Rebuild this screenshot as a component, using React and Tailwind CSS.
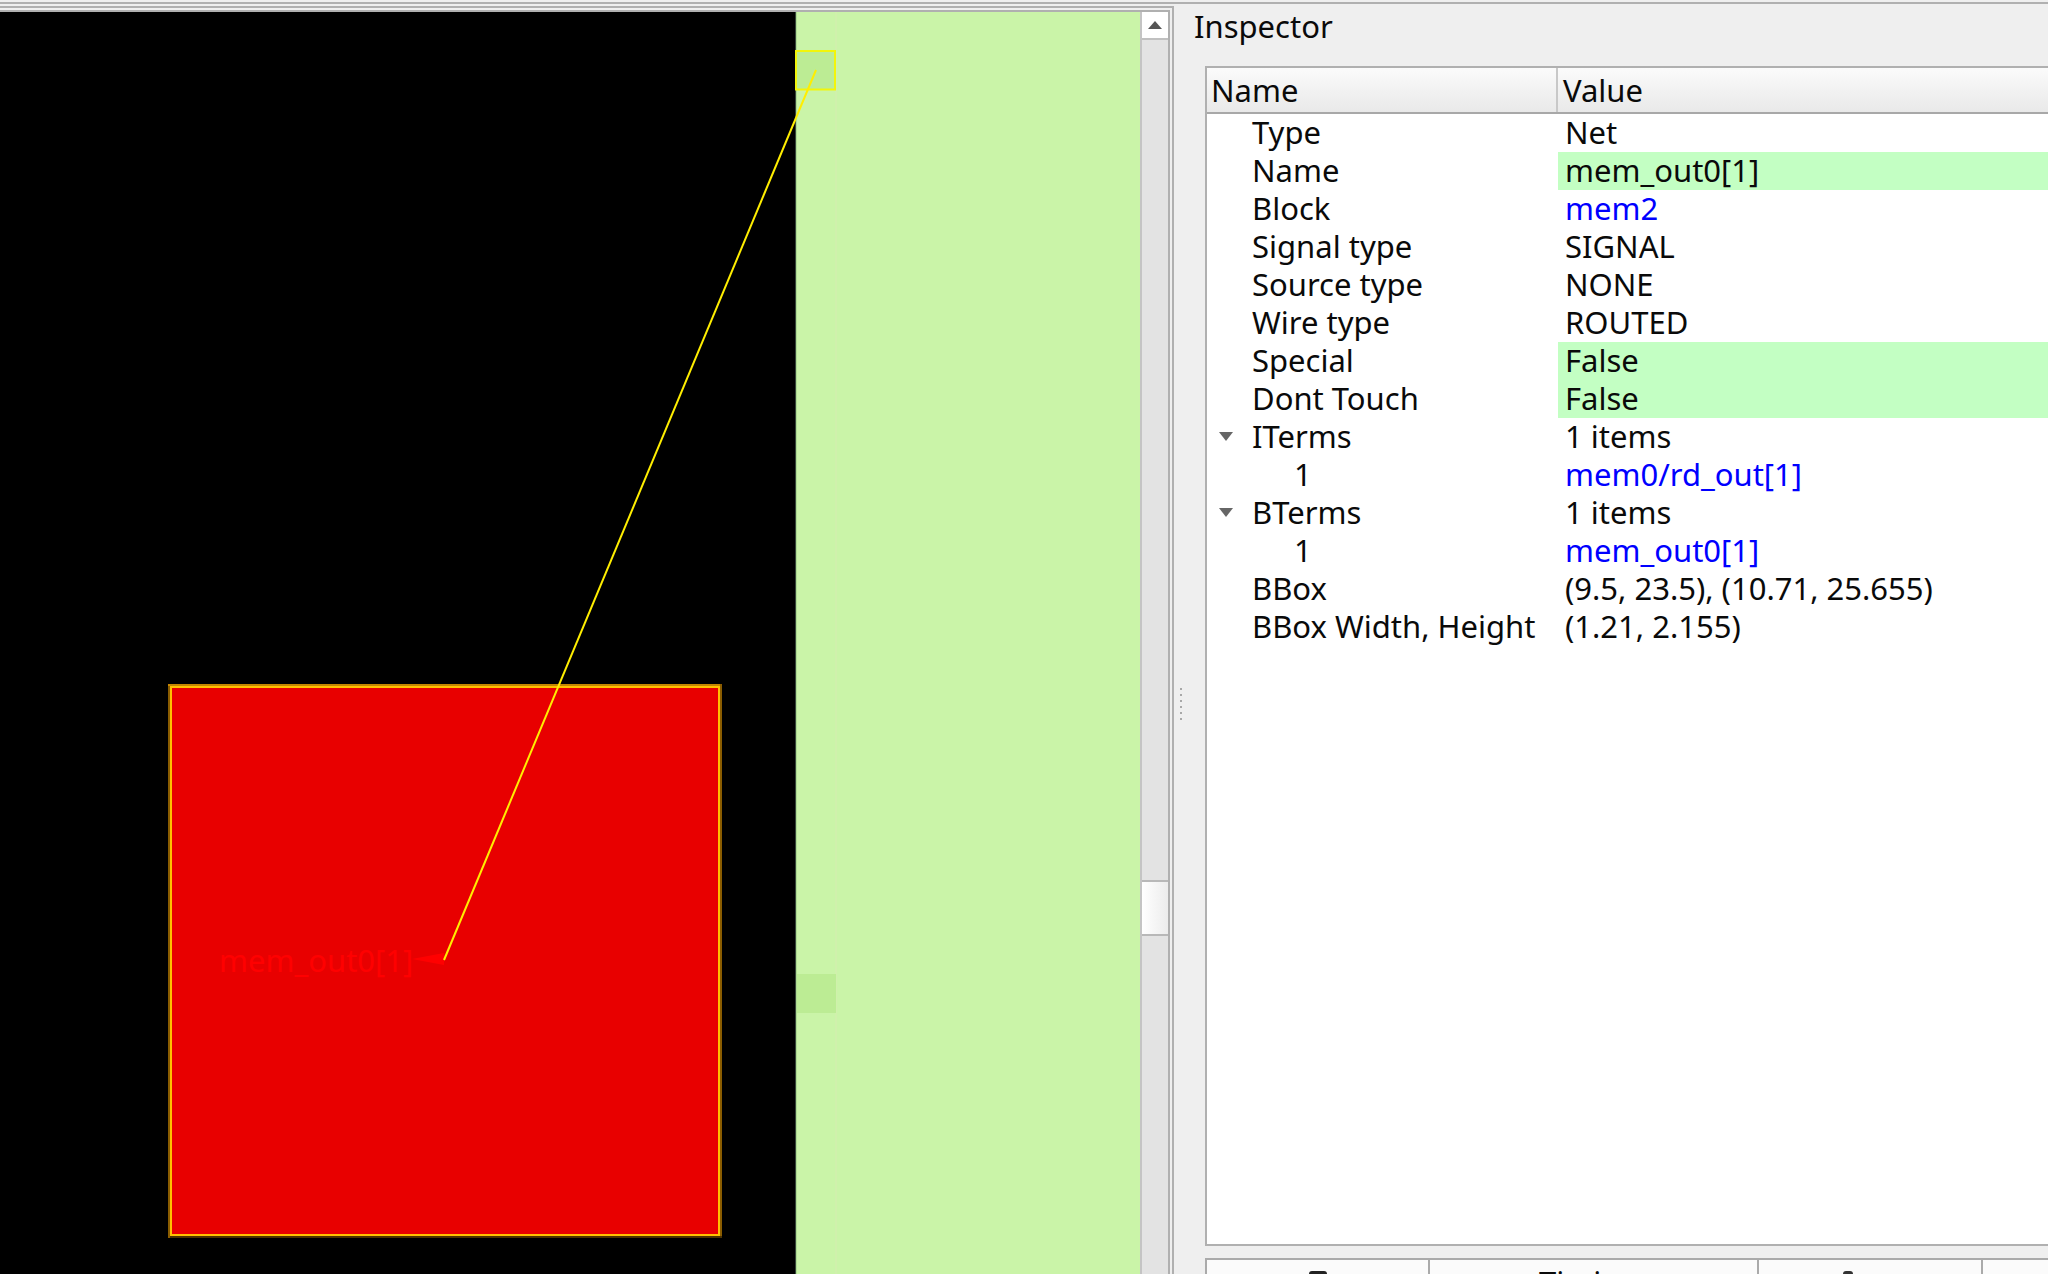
const rows = [
  { name: "Type", value: "Net" },
  { name: "Name", value: "mem_out0[1]", hi: true },
  { name: "Block", value: "mem2", link: true },
  { name: "Signal type", value: "SIGNAL" },
  { name: "Source type", value: "NONE" },
  { name: "Wire type", value: "ROUTED" },
  { name: "Special", value: "False", hi: true },
  { name: "Dont Touch", value: "False", hi: true },
  { name: "ITerms", value: "1 items", arrow: true },
  { name: "1", value: "mem0/rd_out[1]", link: true, child: true },
  { name: "BTerms", value: "1 items", arrow: true },
  { name: "1", value: "mem_out0[1]", link: true, child: true },
  { name: "BBox", value: "(9.5, 23.5), (10.71, 25.655)" },
  { name: "BBox Width, Height", value: "(1.21, 2.155)" },
];

function Row({ r }) {
  return (
    <div className="flex h-[38px] items-center">
      <div className="relative w-[351px] shrink-0 h-full flex items-center pb-[2px]">
        {r.arrow && (
          <svg className="absolute left-[12px] top-[14px]" width="14" height="9" viewBox="0 0 14 9">
            <path d="M0 0H14L7 9Z" fill="#666" />
          </svg>
        )}
        <span className={r.child ? "pl-[87px]" : "pl-[45px]"}>{r.name}</span>
      </div>
      <div className={`flex-1 h-full flex items-center pl-[7px] pb-[2px] ${r.hi ? "bg-[#c3ffc3]" : ""} ${r.link ? "text-[#0000ff]" : ""}`}>
        {r.value}
      </div>
    </div>
  );
}

function Canvas() {
  return (
    <div className="relative flex-1 flex overflow-hidden bg-black">
      <div className="w-[795px] shrink-0 bg-black" />
      <div className="flex-1 bg-[#caf4a8] border-l border-[#39483a]" />
      <svg className="absolute inset-0" width="1140" height="1262" viewBox="0 12 1140 1262">
        <rect x="796" y="12" width="1" height="1262" fill="#aedb92" />
        <rect x="835" y="12" width="2" height="1262" fill="#d0f0ac" />
        <rect x="797" y="974" width="39" height="39" fill="#bcec94" />
        <rect x="797" y="51" width="38" height="38" fill="#bcec94" />
        <rect x="796" y="51" width="39" height="38.5" fill="none" stroke="#f2f50a" strokeWidth="2" />
        <rect x="168" y="684" width="554" height="554" fill="#8a5c00" />
        <rect x="168" y="684" width="552" height="2" fill="#c68600" />
        <rect x="170" y="686" width="550" height="550" fill="#ffc000" />
        <rect x="172" y="688" width="546" height="546" fill="#e80000" />
        <rect x="170" y="1236" width="552" height="2" fill="#4a3000" />
        <path d="M412 959L444 953V965Z" fill="#ff0000" />
        <line x1="444" y1="960" x2="816" y2="70" stroke="#ffee00" strokeWidth="2" />
      </svg>
      <span className="absolute left-[219px] top-[926px] text-[31px] leading-[44px] text-[#ff0000]">mem_out0[1]</span>
    </div>
  );
}

function Scrollbar() {
  return (
    <div className="w-[28px] shrink-0 flex flex-col bg-[#e3e3e3] border-l-2 border-[#c4c4c4]">
      <div className="h-[28px] shrink-0 bg-white border-b-2 border-[#c0c0c0] flex items-center justify-center">
        <svg width="14" height="8" viewBox="0 0 14 8">
          <path d="M7 0L14 8H0Z" fill="#555" />
        </svg>
      </div>
      <div className="h-[840px] shrink-0" />
      <div className="h-[56px] shrink-0 border-y-2 border-[#b8b8b8] bg-gradient-to-r from-white to-[#ececec]" />
      <div className="flex-1" />
    </div>
  );
}

export default function App() {
  return (
    <div
      className="h-[1274px] w-[2048px] overflow-hidden flex flex-col bg-[#efefef] text-[#0a0a0a]"
      style={{ fontFamily: '"Noto Sans", sans-serif' }}
    >
      <div className="h-[2px] shrink-0 bg-[#efefef]" />
      <div className="h-[2px] shrink-0 bg-[#b0b0b0]" />
      <div className="flex-1 min-h-0 flex text-[31px]">
        <div className="w-[1174px] shrink-0 pt-[2px] flex flex-col">
          <div className="flex-1 min-h-0 flex flex-col border-t-2 border-r-2 border-[#b0b0b0] pt-[2px] pr-[2px]">
            <div className="flex-1 min-h-0 flex border-t-2 border-r-2 border-[#b0b0b0]">
              <Canvas />
              <Scrollbar />
            </div>
          </div>
        </div>

        <div className="relative flex-1 min-w-0 flex flex-col">
          <div className="h-[62px] shrink-0 pl-[20px] pt-[2px] leading-[40px]">Inspector</div>
          <div className="h-[1180px] shrink-0 ml-[31px] flex flex-col bg-white border-l-2 border-y-2 border-[#b0b0b0]">
            <div className="h-[46px] shrink-0 flex items-center bg-gradient-to-b from-[#fbfbfb] to-[#e9e9e9] border-b-2 border-[#a8a8a8]">
              <div className="w-[351px] shrink-0 h-full flex items-center pl-[4px] border-r-2 border-[#c8c8c8]">Name</div>
              <div className="pl-[5px]">Value</div>
            </div>
            {rows.map((r, i) => (
              <Row key={i} r={r} />
            ))}
          </div>
          <div className="h-[12px] shrink-0" />
          <div className="flex-1 ml-[31px] flex border-t-2 border-[#aaaaaa] bg-[#fbfbfb] overflow-hidden">
            <div className="w-[223px] shrink-0 border-l-2 border-[#aaaaaa] flex justify-center items-end">
              <div className="w-[18px] h-[3px] rounded-t-full bg-[#222]" />
            </div>
            <div className="w-[329px] shrink-0 border-l-2 border-[#aaaaaa] pl-[109px] pt-[2px] leading-[40px] whitespace-nowrap">Timing</div>
            <div className="w-[224px] shrink-0 border-l-2 border-[#aaaaaa] pl-[84px] flex items-end">
              <div className="w-[10px] h-[3px] rounded-t-full bg-[#333]" />
            </div>
            <div className="flex-1 border-l-2 border-[#aaaaaa]" />
          </div>
          <div className="absolute left-[6px] top-[682px] h-[36px] w-[2px] bg-[radial-gradient(circle,#a8a8a8_1px,transparent_1px)] bg-[length:2px_6px]" />
        </div>
      </div>
    </div>
  );
}
